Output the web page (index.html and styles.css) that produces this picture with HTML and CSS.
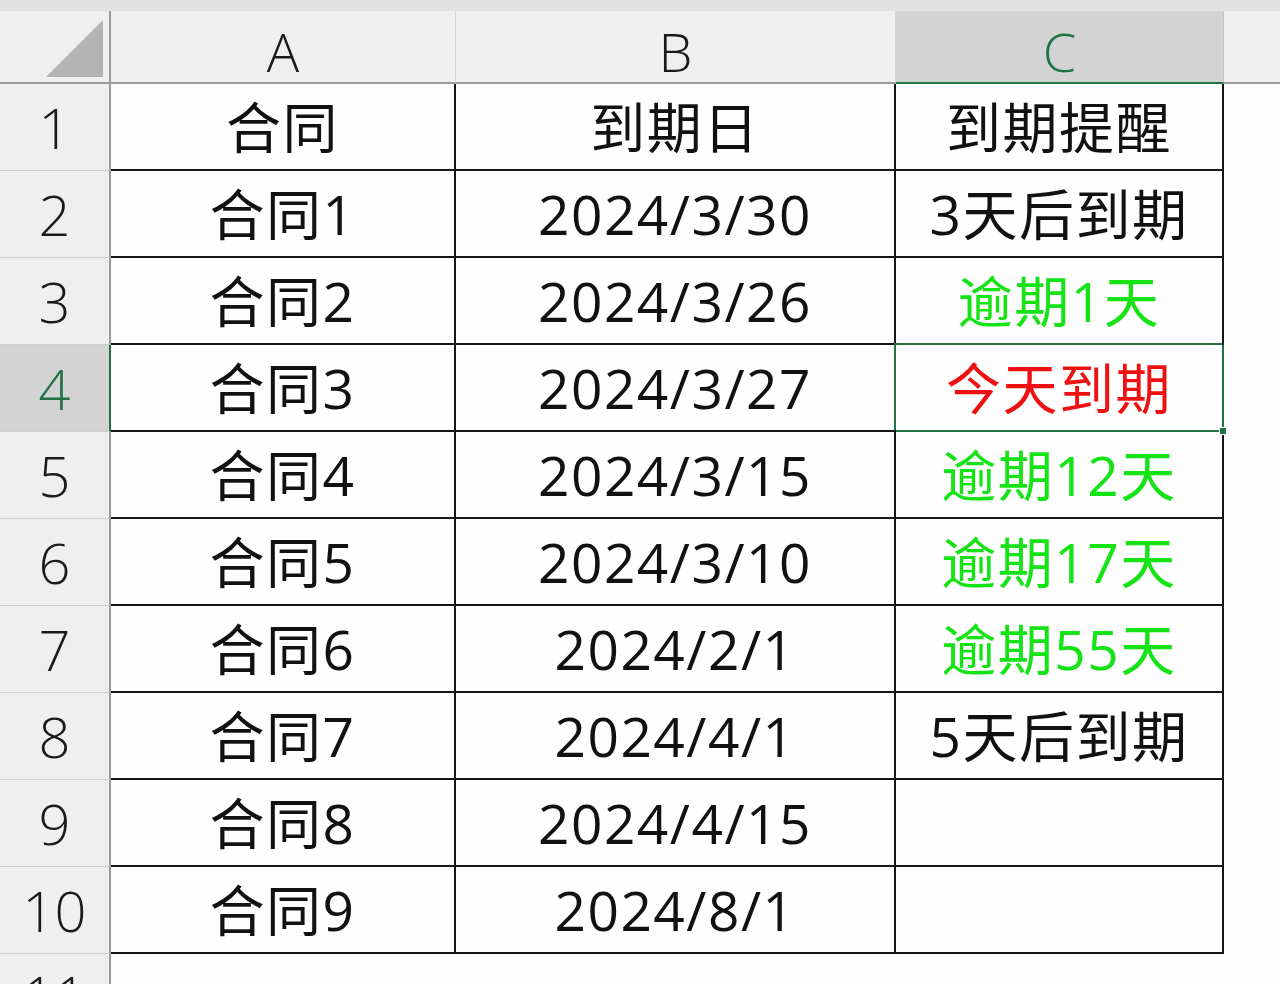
FILE: index.html
```html
<!DOCTYPE html>
<html lang="zh-CN">
<head>
<meta charset="utf-8">
<title>到期提醒</title>
<link rel="stylesheet" href="styles.css">
</head>
<body>
<div class="top-band"></div>
<div class="sheet">
  <div class="corner"><svg class="corner-tri" width="60" height="60" viewBox="0 0 60 60"><polygon points="2,59 59,59 59,2" fill="#b3b3b3"/></svg></div>
  <div class="colhead">A</div>
  <div class="colhead">B</div>
  <div class="colhead sel">C</div>
  <div class="colhead rest"></div>

  <div class="rowhead">1</div><div class="cell">合同</div><div class="cell">到期日</div><div class="cell">到期提醒</div><div class="out"></div>
  <div class="rowhead">2</div><div class="cell">合同1</div><div class="cell">2024/3/30</div><div class="cell">3天后到期</div><div class="out"></div>
  <div class="rowhead">3</div><div class="cell">合同2</div><div class="cell">2024/3/26</div><div class="cell green">逾期1天</div><div class="out"></div>
  <div class="rowhead sel">4</div><div class="cell">合同3</div><div class="cell">2024/3/27</div><div class="cell red active">今天到期</div><div class="out"></div>
  <div class="rowhead">5</div><div class="cell">合同4</div><div class="cell">2024/3/15</div><div class="cell green">逾期12天</div><div class="out"></div>
  <div class="rowhead">6</div><div class="cell">合同5</div><div class="cell">2024/3/10</div><div class="cell green">逾期17天</div><div class="out"></div>
  <div class="rowhead">7</div><div class="cell">合同6</div><div class="cell">2024/2/1</div><div class="cell green">逾期55天</div><div class="out"></div>
  <div class="rowhead">8</div><div class="cell">合同7</div><div class="cell">2024/4/1</div><div class="cell">5天后到期</div><div class="out"></div>
  <div class="rowhead">9</div><div class="cell">合同8</div><div class="cell">2024/4/15</div><div class="cell"></div><div class="out"></div>
  <div class="rowhead">10</div><div class="cell">合同9</div><div class="cell">2024/8/1</div><div class="cell"></div><div class="out"></div>
  <div class="rowhead partial">11</div><div class="out"></div><div class="out"></div><div class="out"></div><div class="out"></div>
</div>
</body>
</html>
```

FILE: styles.css
```css
html, body {
  margin: 0;
  padding: 0;
  width: 1280px;
  height: 984px;
  overflow: hidden;
  background: #fdfdfd;
}

.top-band {
  height: 11px;
  background: #e2e2e2;
}

.sheet {
  display: grid;
  grid-template-columns: 111px 345px 440px 328px 56px;
  grid-template-rows: 73px repeat(10, 87px) 30px;
  font-family: "Open Sans", "Noto Sans CJK SC", sans-serif;
  color: #111;
}

.corner {
  background: #efefef;
  border-right: 2px solid #9a9a9a;
  border-bottom: 2px solid #9a9a9a;
  display: flex;
  align-items: flex-end;
  justify-content: flex-end;
  padding: 0 5px 4px 0;
}

.corner-tri {
  display: block;
}

.colhead {
  background: #efefef;
  border-right: 1px solid #d6d6d6;
  border-bottom: 2px solid #9a9a9a;
  display: flex;
  align-items: center;
  justify-content: center;
  padding-top: 8px;
  font-family: "Open Sans", "Liberation Sans", sans-serif;
  font-weight: 300;
  font-size: 54px;
  color: #1a1a1a;
}

.colhead.sel {
  background: #d3d3d3;
  border-bottom-color: #217346;
  color: #217346;
  border-right-color: #c4c4c4;
}

.colhead.rest {
  border-right: none;
}

.rowhead {
  background: #efefef;
  border-right: 2px solid #9a9a9a;
  border-bottom: 1px solid #cfcfcf;
  display: flex;
  align-items: center;
  justify-content: center;
  font-family: "Open Sans", "Liberation Sans", sans-serif;
  font-weight: 300;
  font-size: 56px;
  color: #1a1a1a;
}

.rowhead.partial {
  align-items: flex-start;
  overflow: hidden;
  line-height: 1;
  padding-top: 13px;
  border-bottom: none;
}

.rowhead.sel {
  background: #d3d3d3;
  border-right-color: #217346;
  color: #217346;
}

.cell {
  background: #fefefe;
  border-right: 2px solid #151515;
  border-bottom: 2px solid #151515;
  display: flex;
  align-items: center;
  justify-content: center;
  font-size: 55px;
  letter-spacing: 1.5px;
  line-height: 1;
  white-space: nowrap;
}

.cell.green {
  color: #16e316;
}

.cell.red {
  color: #ee1111;
}

.cell.active {
  position: relative;
  border-right-color: #217346;
  border-bottom-color: #217346;
  box-shadow: -2px -2px 0 0 #217346;
}

.cell.active::after {
  content: "";
  position: absolute;
  right: -5px;
  bottom: -5px;
  width: 6px;
  height: 6px;
  background: #217346;
  border: 1px solid #fff;
}

.out {
  background: #fdfdfd;
}
```
